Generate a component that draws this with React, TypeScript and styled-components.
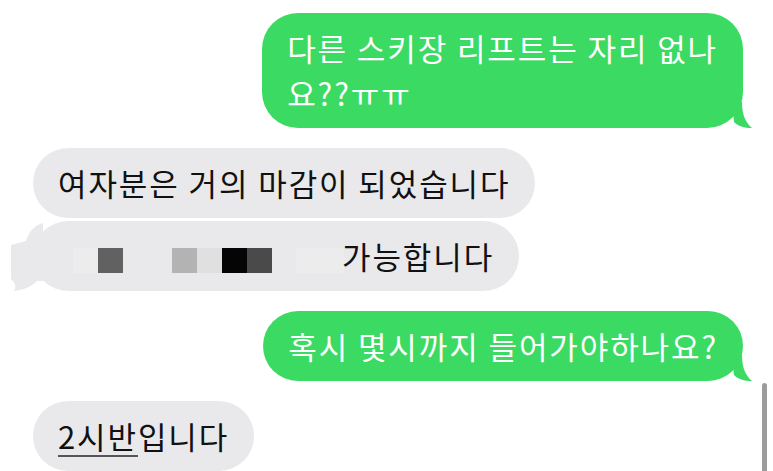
import styled, { createGlobalStyle } from "styled-components";

const GlobalStyle = createGlobalStyle`
	html, body {
		margin: 0;
		padding: 0;
		background: #ffffff;
	}
	body {
		font-family: "Noto Sans CJK KR", "Noto Sans", sans-serif;
		overflow: hidden;
	}
`;

const GREEN = "#3bda63";
const GRAY = "#e9e9eb";

const Screen = styled.div`
	position: relative;
	width: 773px;
	height: 471px;
	overflow: hidden;
	background: #ffffff;
`;

const Thread = styled.div`
	display: flex;
	flex-direction: column;
	padding: 13px 30px 0 33px;
`;

const Row = styled.div<{ $sent?: boolean; $gap?: number }>`
	display: flex;
	justify-content: ${(p) => (p.$sent ? "flex-end" : "flex-start")};
	margin-top: ${(p) => p.$gap ?? 0}px;
`;

const Bubble = styled.div<{ $sent?: boolean; $padLeft?: number }>`
	position: relative;
	max-width: 520px;
	padding: 12px 25px 13px ${(p) => p.$padLeft ?? 25}px;
	border-radius: 36px;
	background: ${(p) => (p.$sent ? GREEN : GRAY)};
	color: ${(p) => (p.$sent ? "#ffffff" : "#111111")};
	font-size: 31px;
	line-height: 45px;
	letter-spacing: 1.9px;
	white-space: pre-wrap;
`;

const Tail = styled.svg<{ $sent?: boolean }>`
	position: absolute;
	bottom: 0;
	${(p) => (p.$sent ? "right: -11px;" : "left: -24px;")}
`;

const Mosaic = styled.span`
	display: inline-flex;
	vertical-align: -4px;
	height: 25px;
	margin-right: -2px;
`;

const Pixel = styled.span<{ $c: string; $w?: number }>`
	display: block;
	width: ${(p) => p.$w ?? 25}px;
	height: 25px;
	background: ${(p) => p.$c};
`;

const Link = styled.span`
	text-decoration: underline;
	text-decoration-color: #555;
	text-decoration-thickness: 2px;
	text-underline-offset: 6px;
`;

const ScrollIndicator = styled.div`
	position: absolute;
	right: 6px;
	top: 383px;
	width: 5px;
	height: 100px;
	border-radius: 3px;
	background: #9c9c9c;
`;

function SentTail() {
	return (
		<Tail $sent width="22" height="26" viewBox="0 0 22 26">
			<path d="M0 0 L10 0 C10 12 13 20 20 26 C12 26 6 24 2 20 Z" fill={GREEN} />
		</Tail>
	);
}

function ReceivedTail() {
	return (
		<Tail width="34" height="68" viewBox="0 0 34 68">
			<path
				d="M34 0 C26 2 20 8 17 18 L2 22 L2 56 C6 60 8 64 5 68 C14 67 22 64 28 58 L34 58 Z"
				fill={GRAY}
			/>
		</Tail>
	);
}

export default function App() {
	return (
		<Screen>
			<GlobalStyle />
			<Thread>
				<Row $sent>
					<Bubble $sent>
						다른 스키장 리프트는 자리 없나{"\n"}요??ㅠㅠ
						<SentTail />
					</Bubble>
				</Row>
				<Row $gap={20}>
					<Bubble>여자분은 거의 마감이 되었습니다</Bubble>
				</Row>
				<Row $gap={3}>
					<Bubble $padLeft={40}>
						<ReceivedTail />
						<Mosaic>
							<Pixel $c="#ececec" />
							<Pixel $c="#616161" />
							<Pixel $c={GRAY} $w={49} />
							<Pixel $c="#b3b3b3" />
							<Pixel $c="#e0e0e0" />
							<Pixel $c="#050505" />
							<Pixel $c="#4a4a4a" />
							<Pixel $c={GRAY} $w={24} />
							<Pixel $c="#ececec" $w={48} />
						</Mosaic>
						가능합니다
					</Bubble>
				</Row>
				<Row $sent $gap={20}>
					<Bubble $sent>
						혹시 몇시까지 들어가야하나요?
						<SentTail />
					</Bubble>
				</Row>
				<Row $gap={20}>
					<Bubble>
						<Link>2시반</Link>입니다
					</Bubble>
				</Row>
			</Thread>
			<ScrollIndicator />
		</Screen>
	);
}
